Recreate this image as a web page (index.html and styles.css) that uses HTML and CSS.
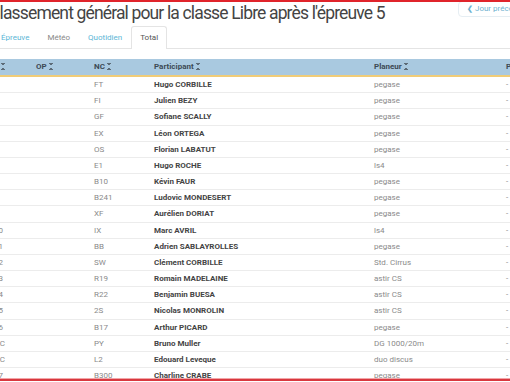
FILE: index.html
```html
<!DOCTYPE html>
<html lang="fr">
<head>
<meta charset="utf-8">
<title>Classement général</title>
<link rel="stylesheet" href="styles.css">
</head>
<body>
<div class="page">
  <header class="head">
    <h1 class="title">Classement général pour la classe Libre après l'épreuve 5</h1>
    <a class="prev-btn" href="#"><span class="chev">❮</span> Jour précédent</a>
  </header>
  <nav class="tabs">
    <a class="tab link" href="#">Épreuve</a>
    <a class="tab muted" href="#">Météo</a>
    <a class="tab link" href="#">Quotidien</a>
    <a class="tab active" href="#">Total</a>
  </nav>
  <table class="results">
    <colgroup>
      <col class="c-rank"><col class="c-op"><col class="c-nc"><col class="c-part"><col class="c-plan"><col class="c-next">
    </colgroup>
    <thead>
      <tr>
        <th># <span class="sort"></span></th>
        <th>OP <span class="sort"></span></th>
        <th>NC <span class="sort"></span></th>
        <th>Participant <span class="sort"></span></th>
        <th>Planeur <span class="sort"></span></th>
        <th>Points <span class="sort"></span></th>
      </tr>
    </thead>
    <tbody>
      <tr><td>1</td><td></td><td>FT</td><td class="name">Hugo CORBILLE</td><td>pegase</td><td>-</td></tr>
      <tr><td>2</td><td></td><td>FI</td><td class="name">Julien BEZY</td><td>pegase</td><td>-</td></tr>
      <tr><td>3</td><td></td><td>GF</td><td class="name">Sofiane SCALLY</td><td>pegase</td><td>-</td></tr>
      <tr><td>4</td><td></td><td>EX</td><td class="name">Léon ORTEGA</td><td>pegase</td><td>-</td></tr>
      <tr><td>5</td><td></td><td>OS</td><td class="name">Florian LABATUT</td><td>pegase</td><td>-</td></tr>
      <tr><td>6</td><td></td><td>E1</td><td class="name">Hugo ROCHE</td><td>ls4</td><td>-</td></tr>
      <tr><td>7</td><td></td><td>B10</td><td class="name">Kévin FAUR</td><td>pegase</td><td>-</td></tr>
      <tr><td>8</td><td></td><td>B241</td><td class="name">Ludovic MONDESERT</td><td>pegase</td><td>-</td></tr>
      <tr><td>9</td><td></td><td>XF</td><td class="name">Aurélien DORIAT</td><td>pegase</td><td>-</td></tr>
      <tr><td>10</td><td></td><td>IX</td><td class="name">Marc AVRIL</td><td>ls4</td><td>-</td></tr>
      <tr><td>11</td><td></td><td>BB</td><td class="name">Adrien SABLAYROLLES</td><td>pegase</td><td>-</td></tr>
      <tr><td>12</td><td></td><td>SW</td><td class="name">Clément CORBILLE</td><td>Std. Cirrus</td><td>-</td></tr>
      <tr><td>13</td><td></td><td>R19</td><td class="name">Romain MADELAINE</td><td>astir CS</td><td>-</td></tr>
      <tr><td>14</td><td></td><td>R22</td><td class="name">Benjamin BUESA</td><td>astir CS</td><td>-</td></tr>
      <tr><td>15</td><td></td><td>2S</td><td class="name">Nicolas MONROLIN</td><td>astir CS</td><td>-</td></tr>
      <tr><td>16</td><td></td><td>B17</td><td class="name">Arthur PICARD</td><td>pegase</td><td>-</td></tr>
      <tr><td>HC</td><td></td><td>PY</td><td class="name">Bruno Muller</td><td>DG 1000/20m</td><td>-</td></tr>
      <tr><td>HC</td><td></td><td>L2</td><td class="name">Edouard Leveque</td><td>duo discus</td><td>-</td></tr>
      <tr><td>17</td><td></td><td>B300</td><td class="name">Charline CRABE</td><td>pegase</td><td>-</td></tr>
      <tr><td>18</td><td></td><td>AB</td><td class="name">—</td><td>pegase</td><td>-</td></tr>
    </tbody>
  </table>
</div>
<div class="bottom-bar"></div>
</body>
</html>
```
FILE: styles.css
```css
html, body {
  margin: 0;
  padding: 0;
  background: #fff;
  overflow: hidden;
  height: 100%;
}
body {
  border-top: 2px solid #e0242b;
  box-sizing: border-box;
  font-family: Roboto, "Open Sans", Arial, sans-serif;
  color: #777;
}
.page {
  width: 580px;
  margin-left: -14px;
}
.head {
  display: grid;
  grid-template-columns: 472px auto;
  align-items: start;
}
.title {
  margin: 0 0 0 3px;
  font-family: Roboto, Arial, sans-serif;
  font-weight: 400;
  font-size: 17.5px;
  letter-spacing: -0.85px;
  line-height: 22px;
  color: #444;
  white-space: nowrap;
  overflow: hidden;
}
.prev-btn {
  justify-self: start;
  margin-top: -1px;
  padding: 2px 8px;
  font-size: 8px;
  line-height: 10px;
  color: #6fb2d0;
  text-decoration: none;
  border: 1px solid #e6eef3;
  border-radius: 4px;
  white-space: nowrap;
}
.chev { font-size: 7px; font-weight: 700; }
.tabs {
  display: flex;
  margin-top: 2px;
  margin-left: 6px;
  border-bottom: 1px solid #e4e4e4;
  width: 560px;
}
.tab {
  padding: 0 8px;
  height: 21px;
  line-height: 22px;
  font-size: 8px;
  text-decoration: none;
  border: 1px solid transparent;
  border-bottom: none;
  border-radius: 3px 3px 0 0;
  margin-bottom: -1px;
}
.tab.link { color: #5bb6d6; }
.tab.muted { color: #888; }
.tab.active {
  color: #555;
  background: #fff;
  border-color: #e4e4e4;
  height: 22px;
}
.results {
  margin-top: 10px;
  border-collapse: collapse;
  table-layout: fixed;
  width: 574px;
  font-size: 8px;
}
.c-rank { width: 42px; }
.c-op { width: 58px; }
.c-nc { width: 60px; }
.c-part { width: 220px; }
.c-plan { width: 132px; }
.c-next { width: 62px; }
.results th {
  background: #a9c9e0;
  color: #3d4a55;
  font-weight: 700;
  text-align: left;
  padding: 0 8px;
  height: 16px;
  line-height: 16px;
  border-bottom: 2px solid #f0cc78;
  white-space: nowrap;
}
.sort {
  display: inline-block;
  width: 4px;
  height: 7px;
  vertical-align: -1px;
  background:
    linear-gradient(to top right, transparent 50%, #5c6b77 50%) left top / 2px 3px no-repeat,
    linear-gradient(to top left, transparent 50%, #5c6b77 50%) right top / 2px 3px no-repeat,
    linear-gradient(to bottom right, transparent 50%, #5c6b77 50%) left bottom / 2px 3px no-repeat,
    linear-gradient(to bottom left, transparent 50%, #5c6b77 50%) right bottom / 2px 3px no-repeat;
}
.results td {
  padding: 0 8px;
  height: 15.17px;
  line-height: 15.17px;
  border-bottom: 1px solid #ececec;
  color: #8a8a8a;
  white-space: nowrap;
  overflow: hidden;
}
.results td.name {
  color: #444;
  font-weight: 700;
}
.bottom-bar {
  position: fixed;
  left: 0;
  right: 0;
  bottom: 1px;
  height: 2px;
  background: #d9383f;
  box-shadow: 0 -1px 0 #f2a5a8;
}
```
